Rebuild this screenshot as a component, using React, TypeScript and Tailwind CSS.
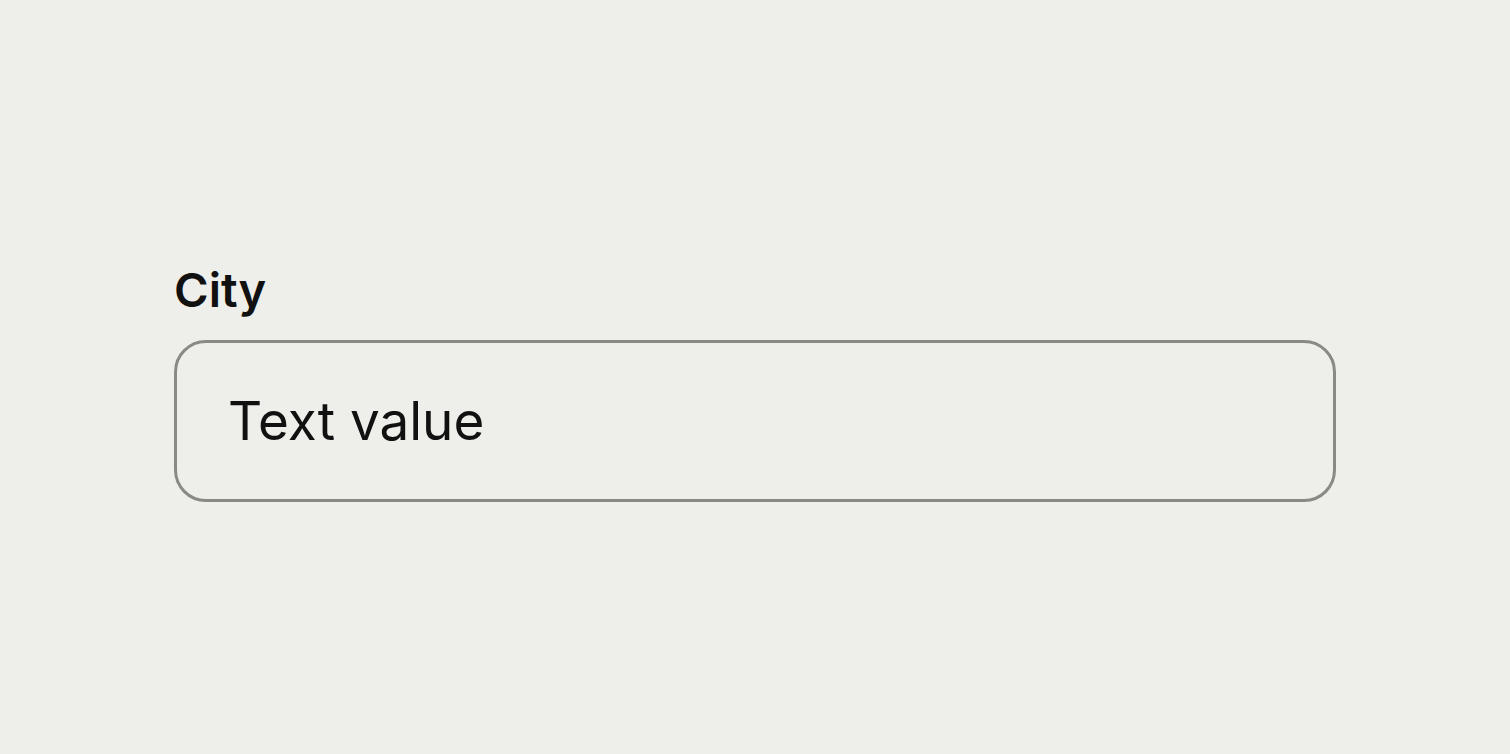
export default function App() {
    return (
        <div className="min-h-screen w-full bg-[#eeefea] flex flex-col items-center pt-[258px] font-['Inter',sans-serif]">
            <div className="w-[1162px] flex flex-col">
                {/* Label */}
                <label className="text-[47px] font-semibold text-[#111111] leading-[64px] mb-[18px]">City</label>
                {/* Input */}
                <div className="h-[162px] rounded-[32px] border-[3px] border-[#888a86] flex items-center pl-[51px]">
                    <span className="text-[53px] text-[#111111] leading-none">Text value</span>
                </div>
            </div>
        </div>
    )
}
